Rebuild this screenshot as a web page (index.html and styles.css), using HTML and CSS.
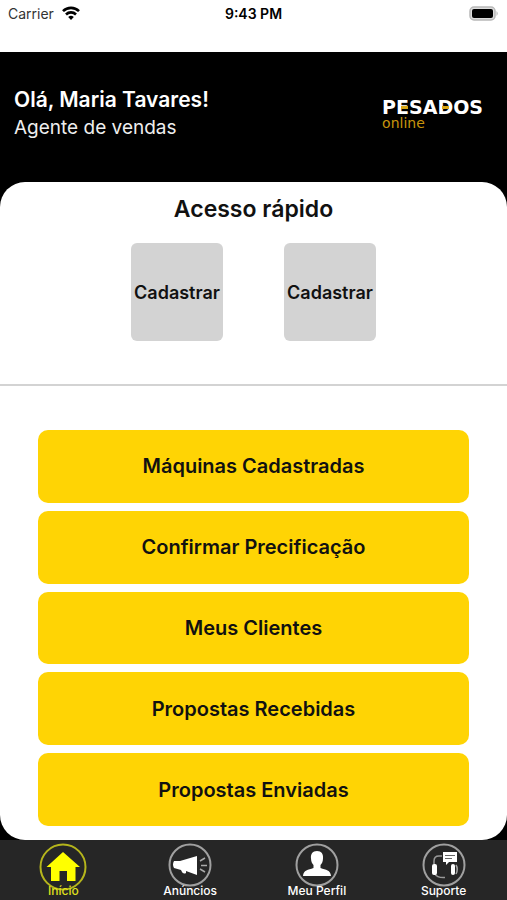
FILE: index.html
```html
<!DOCTYPE html>
<html lang="pt-BR">
<head>
    <meta charset="UTF-8">
    <meta name="viewport" content="width=device-width, initial-scale=1.0">
    <title>Pesados Online</title>
    <link rel="stylesheet" href="styles.css">
</head>
<body>
    <div class="status-bar">
        <div class="carrier">
            <span>Carrier</span>
            <svg width="18" height="18" viewBox="0 0 18 18" fill="none" stroke="#000" stroke-width="2.6">
                <path d="M1 7.2C5.5 2.700 12.500 2.700 17 7.2"/>
                <path d="M4 10.500C6.800 7.700 11.200 7.700 14 10.500"/>
                <path d="M6.200 13Q9 10.400 11.800 13L9 16Z" fill="#000" stroke="none"/>
            </svg>
        </div>
        <span class="clock">9:43 PM</span>
        <div class="battery">
            <svg width="31" height="15" viewBox="0 0 31 15">
                <rect x="2" y="1" width="25" height="13" rx="4" fill="#ddd" stroke="#b8b8b8" stroke-width="1.5"/>
                <rect x="4" y="3" width="21" height="9" rx="2" fill="#000"/>
                <path d="M28.5 5Q31 7.5 28.5 10Z" fill="#b8b8b8"/>
            </svg>
        </div>
    </div>

    <header class="header">
        <div>
            <h1>Olá, Maria Tavares!</h1>
            <p>Agente de vendas</p>
        </div>
        <div class="logo">
            <span class="logo-top">P<span class="bar">E</span>SA<span class="bar">D</span>OS</span>
            <span class="logo-bottom">online</span>
        </div>
    </header>

    <main class="content">
        <section class="quick">
            <h2>Acesso rápido</h2>
            <div class="quick-buttons">
                <button>Cadastrar</button>
                <button>Cadastrar</button>
            </div>
        </section>
        <section class="menu">
            <button>Máquinas Cadastradas</button>
            <button>Confirmar Precificação</button>
            <button>Meus Clientes</button>
            <button>Propostas Recebidas</button>
            <button>Propostas Enviadas</button>
        </section>
    </main>

    <nav class="tabs">
        <a href="#" class="active">
            <svg width="48" height="48" viewBox="0 0 48 48">
                <circle cx="24" cy="24" r="22.5" fill="none" stroke="#b5b51c" stroke-width="2"/>
                <path d="M24 9L41 24H36.500V38H28V28H20.500V38H12V24H7.500Z" fill="#ff0"/>
            </svg>
            <span>Início</span>
        </a>
        <a href="#">
            <svg width="44" height="44" viewBox="0 0 44 44">
                <circle cx="22" cy="22" r="20.500" fill="none" stroke="#a0a0a0" stroke-width="2"/>
                <path d="M6 18H12L29 13V32L18 28V30Q15 32 13 27L6 25Q4 21.500 6 18Z" fill="#fff"/>
                <path d="M32 18L37 15M33 22.500H39M32 26L37 29" stroke="#aaa" stroke-width="1.500"/>
            </svg>
            <span>Anúncios</span>
        </a>
        <a href="#">
            <svg width="44" height="44" viewBox="0 0 44 44">
                <circle cx="22" cy="22" r="20.500" fill="none" stroke="#a0a0a0" stroke-width="2"/>
                <path d="M22 8C26.500 8 28.500 11 28 15.500C28 19 26.500 21 25.500 22V25C31 27 35.500 27 36 33H8C8.500 27 13 27 18.500 25V22C17.500 21 16 19 16 15.500C15.500 11 17.500 8 22 8Z" fill="#fff"/>
            </svg>
            <span>Meu Perfil</span>
        </a>
        <a href="#">
            <svg width="44" height="44" viewBox="0 0 44 44">
                <circle cx="22" cy="22" r="20.500" fill="none" stroke="#a0a0a0" stroke-width="2"/>
                <path d="M12 21V18Q12 13 17 13H20M13 31Q15 35 23 34.500" fill="none" stroke="#999" stroke-width="1.500"/>
                <rect x="10" y="21" width="5" height="11" rx="2" fill="#fff"/>
                <rect x="29" y="21" width="4" height="11" rx="2" fill="#fff"/>
                <path d="M34 22Q36.500 26 34 31" fill="none" stroke="#aaa" stroke-width="1.500"/>
                <path d="M21 9H35V19H27L24 22V19H21Z" fill="#fff"/>
                <path d="M23 12.500H33M23 15.500H30" stroke="#666"/>
            </svg>
            <span>Suporte</span>
        </a>
    </nav>
</body>
</html>
```
FILE: styles.css
```css
* {
    box-sizing: border-box;
}
body {
    margin: 0;
    min-height: 100vh;
    display: flex;
    flex-direction: column;
    background: #000;
    font-family: Inter, "Liberation Sans", sans-serif;
}
h1, h2, p {
    margin: 0;
}
button {
    border: none;
    padding: 0;
    font-family: inherit;
    font-weight: 600;
    color: #111;
    cursor: pointer;
}

/* barra de status */
.status-bar {
    height: 52px;
    padding: 4px 8px;
    display: grid;
    grid-template-columns: 1fr auto 1fr;
    align-items: start;
    background: #fff;
    font-size: 14px;
    line-height: 20px;
}
.carrier {
    display: flex;
    gap: 8px;
    color: #333;
}
.clock {
    font-weight: 600;
}
.battery {
    display: flex;
    justify-content: flex-end;
    padding-top: 2px;
}

/* topo */
.header {
    height: 130px;
    padding: 34px 24px 0 14px;
    display: flex;
    justify-content: space-between;
    color: #fff;
}
.header h1 {
    font-size: 21px;
    line-height: 28px;
    font-weight: 600;
}
.header p {
    font-size: 19px;
    line-height: 28px;
    color: #eee;
}
.logo {
    display: flex;
    flex-direction: column;
    padding-top: 12px;
    font-family: "DejaVu Sans", sans-serif;
}
.logo-top {
    font-size: 19px;
    line-height: 18px;
    font-weight: 700;
}
.bar {
    position: relative;
}
.bar::after {
    content: "";
    position: absolute;
    left: 5px;
    top: 10px;
    width: 7px;
    height: 3px;
    background: #d9a514;
}
.logo-bottom {
    font-size: 14px;
    line-height: 14px;
    color: #c8940c;
}

/* conteúdo */
.content {
    flex: 1;
    display: flex;
    flex-direction: column;
    background: #fff;
    border-radius: 25px;
}
.quick {
    height: 204px;
    padding-top: 12px;
    border-bottom: 2px solid #d3d3d3;
    text-align: center;
}
.quick h2 {
    font-size: 23px;
    line-height: 30px;
    font-weight: 600;
    color: #111;
}
.quick-buttons {
    display: flex;
    justify-content: center;
    gap: 61px;
    margin-top: 19px;
}
.quick-buttons button {
    width: 92px;
    height: 98px;
    border-radius: 6px;
    background: #d3d3d3;
    font-size: 18px;
}
.menu {
    flex: 1;
    width: 85%;
    margin: 0 auto;
    padding: 44px 0 14px;
    display: flex;
    flex-direction: column;
    gap: 8px;
}
.menu button {
    flex: 1;
    border-radius: 10px;
    background: #ffd404;
    font-size: 20px;
}

/* abas */
.tabs {
    height: 60px;
    display: flex;
    background: #262626;
}
.tabs a {
    flex: 1;
    height: 60px;
    padding-bottom: 1px;
    display: flex;
    flex-direction: column;
    align-items: center;
    justify-content: flex-end;
    color: #fff;
    font-size: 12px;
    line-height: 16px;
    font-weight: 500;
    text-decoration: none;
}
.tabs svg {
    flex-shrink: 0;
    margin-bottom: -4px;
}
.tabs .active {
    color: #e0e01c;
}
.tabs .active svg {
    margin-bottom: -8px;
}
```
